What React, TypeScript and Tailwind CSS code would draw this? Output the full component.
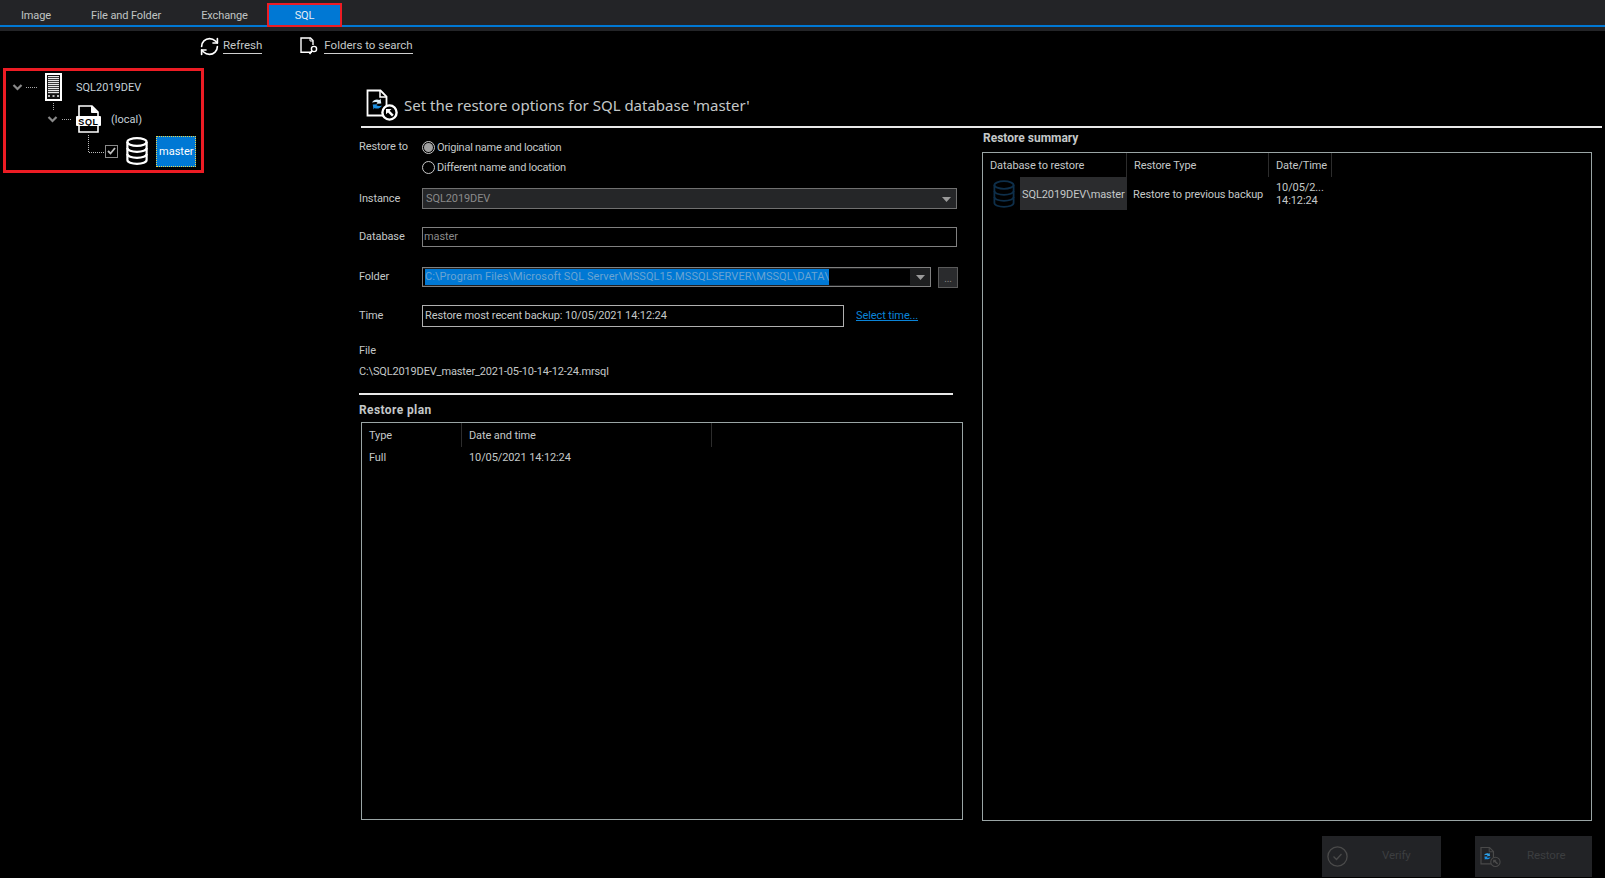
import { RefreshCw } from 'lucide-react';

const tabs = [
  { label: 'Image', width: 'w-[72px]' },
  { label: 'File and Folder', width: 'w-[108px]' },
  { label: 'Exchange', width: 'w-[89px]' },
];

function ServerIcon() {
  return (
    <svg width="17" height="28" viewBox="0 0 17 28">
      <rect x="0.5" y="0.5" width="16" height="27" fill="#fff" stroke="#fff" />
      <rect x="2" y="2" width="13" height="24" fill="#111" />
      {[3, 5, 7, 9, 11, 13, 15, 17, 19].map((y) => (
        <rect key={y} x="3" y={y} width="11" height="1.2" fill="#e8e8e8" />
      ))}
      <rect x="3" y="22" width="2" height="2" fill="#bbb" />
      <rect x="7.500" y="22" width="2" height="2" fill="#bbb" />
      <rect x="12" y="22" width="2" height="2" fill="#bbb" />
    </svg>
  );
}

function SqlFileIcon() {
  return (
    <svg width="26" height="28" viewBox="0 0 26 28">
      <path d="M3 1h13l6 6v20H3z" fill="#000" stroke="#fff" strokeWidth="1.6" />
      <path d="M15.500 1v6.500H22" fill="#fff" stroke="#fff" />
      <rect x="0" y="11" width="25" height="10" rx="1" fill="#fff" />
      <text x="12.5" y="19.5" textAnchor="middle" fontSize="9" fontWeight="700" fontFamily="Liberation Sans, sans-serif" fill="#000" letterSpacing="0.6">SQL</text>
    </svg>
  );
}

function DbIcon({ color = '#fff', w = 22, h = 28, sw = 2.2 }: { color?: string; w?: number; h?: number; sw?: number }) {
  return (
    <svg width={w} height={h} viewBox="0 0 22 28" fill="none" stroke={color} strokeWidth={sw}>
      <ellipse cx="11" cy="5" rx="9.6" ry="3.8" />
      <path d="M1.4 5v18c0 2.2 4.3 3.8 9.6 3.8s9.6-1.6 9.6-3.8V5" />
      <path d="M1.4 11c0 2.2 4.3 3.8 9.6 3.8s9.6-1.6 9.6-3.8" />
      <path d="M1.4 17c0 2.2 4.3 3.8 9.6 3.8s9.6-1.6 9.6-3.8" />
    </svg>
  );
}

function FolderSearchIcon() {
  return (
    <svg width="19" height="19" viewBox="0 0 19 19" fill="none" stroke="#fff" strokeWidth="1.4">
      <path d="M11 14.500v.7H1V1h9.500l2.500 2.500V8" />
      <path d="M10 1v3h3" strokeWidth="1" />
      <circle cx="14" cy="12" r="2.600" />
      <path d="M12 14L9.500 17" strokeWidth="1.800" />
    </svg>
  );
}

function RestoreIcon({ dim = false }: { dim?: boolean }) {
  const c = dim ? '#4a4a4a' : '#fff';
  const bg = dim ? '#222326' : '#000';
  return (
    <svg width="32" height="32" viewBox="0 0 32 32" fill="none">
      <path d="M1.5 1.5h13l6 6v19h-19z" stroke={c} strokeWidth="1.8" fill={bg} />
      <path d="M14 1.5v6.500h6.500" stroke={c} strokeWidth="1.5" />
      <path d="M6 13.500c1.500-3 5-3.800 7.500-2.500l1-1.400.8 5-4.800.2 1-1.400c-1.800-.8-3.600-.4-5.500.1z" fill={dim ? '#2f9fe6' : '#d8ecf8'} />
      <path d="M16 16.500c-1.500 3-5 3.800-7.500 2.500l-1 1.400-.8-5 4.800-.2-1 1.400c1.800.8 3.600.4 5.500-.1z" fill="#1a8ee0" />
      <circle cx="23.500" cy="23.500" r="7.100" stroke={c} strokeWidth={dim ? 1.6 : 2.400} fill={bg} />
      <path d="M20 20h5.500l-1.800 1.800 4 4-1.700 1.700-4-4L20 25.300z" fill={c} />
    </svg>
  );
}

function CheckCircleIcon() {
  return (
    <svg width="21" height="21" viewBox="0 0 21 21" fill="none" stroke="#4a4a4a" strokeWidth="1.3">
      <circle cx="10.500" cy="10.500" r="9.600" />
      <path d="M6.500 10.500l3 3 5-5.500" />
    </svg>
  );
}

function Caret({ color = '#9a9a9a' }: { color?: string }) {
  return (
    <svg width="9" height="5" viewBox="0 0 9 5">
      <path d="M0 0h9L4.500 5z" fill={color} />
    </svg>
  );
}

function Radio({ checked, label }: { checked?: boolean; label: string }) {
  return (
    <div className="flex h-[20px] items-center">
      <span className="flex h-[13px] w-[13px] items-center justify-center rounded-full border border-[#c8c8c8]">
        {checked && <span className="h-[9px] w-[9px] rounded-full bg-[#a0a0a0]" />}
      </span>
      <span className="ml-[2px] pt-[2px] tracking-[-0.25px]">{label}</span>
    </div>
  );
}

function ColHead({ label, className }: { label: string; className: string }) {
  return <div className={`flex h-[24px] items-center whitespace-nowrap border-r border-[#2c2c2c] pl-[7px] pt-[3px] ${className}`}>{label}</div>;
}

function Tree() {
  return (
    <div className="ml-[3px] h-[105px] w-[201px] border-[3px] border-[#ed1c24] tracking-normal">
      <div className="flex h-[32px] items-center">
        <svg width="39" height="32" viewBox="0 0 39 32" fill="none">
          <path d="M7.500 14l4 4 4-4" stroke="#8a8a8a" strokeWidth="2.200" />
          <path d="M20 16.500h11" stroke="#aaa" strokeDasharray="1 1" />
        </svg>
        <ServerIcon />
        <span className="ml-[14px] pt-[2px] text-[#c4d0d8]">SQL2019DEV</span>
      </div>
      <div className="flex h-[32px] items-center">
        <svg width="70" height="32" viewBox="0 0 70 32" fill="none">
          <path d="M47.500 0v8" stroke="#aaa" strokeDasharray="1 1" />
          <path d="M42.500 14l4 4 4-4" stroke="#8a8a8a" strokeWidth="2.200" />
          <path d="M56 16.500h10" stroke="#aaa" strokeDasharray="1 1" />
        </svg>
        <SqlFileIcon />
        <span className="ml-[9px] pt-[2px] text-[#c4d0d8]">(local)</span>
      </div>
      <div className="flex h-[32px] items-center">
        <svg width="99" height="32" viewBox="0 0 99 32" fill="none">
          <path d="M82.500 0v17.500H99" stroke="#bbb" strokeDasharray="1 1" />
        </svg>
        <span className="flex h-[13px] w-[13px] items-center justify-center border border-[#8a8a8a]">
          <svg width="9" height="8" viewBox="0 0 9 8" fill="none">
            <path d="M1 4l2.500 2.500L8 1" stroke="#c0c0c0" strokeWidth="1.800" />
          </svg>
        </span>
        <span className="ml-[8px]">
          <DbIcon />
        </span>
        <span className="ml-[8px] flex h-[31px] w-[40px] items-center border border-dotted border-[#e8d44a] bg-[#0078d4] pl-[2px] pt-[2px] text-white">
          master
        </span>
      </div>
    </div>
  );
}

function RestoreForm() {
  return (
    <div className="w-[623px] shrink-0">
      <div className="mt-[9px] flex">
        <div className="w-[63px] pt-[1px] leading-[18px]">Restore to</div>
        <div>
          <Radio checked label="Original name and location" />
          <Radio label="Different name and location" />
        </div>
      </div>

      <div className="mt-[11px] flex h-[21px] items-center">
        <div className="w-[63px] pt-[1px]">Instance</div>
        <div className="flex h-full w-[535px] items-center justify-between border border-[#707070] bg-[#252628] pl-[3px] pr-[5px] pt-[1px] text-[#8a8a8a]">
          SQL2019DEV
          <Caret />
        </div>
      </div>

      <div className="mt-[18px] flex h-[20px] items-center">
        <div className="w-[63px] pt-[1px]">Database</div>
        <div className="flex h-full w-[535px] items-center border border-[#808080] pl-[1px] pt-[1px] text-[#8a8a8a]">master</div>
      </div>

      <div className="mt-[20px] flex h-[20px] items-center">
        <div className="w-[63px]">Folder</div>
        <div className="flex h-full w-[509px] items-center border border-[#808080] bg-[#1e1f20]">
          <div className="flex h-[16px] w-[487px] items-center bg-black pl-[2px]">
            <span className="bg-[#0078d4] leading-[16px] tracking-[0.08px] text-[#6aa4d2]">C:\Program Files\Microsoft SQL Server\MSSQL15.MSSQLSERVER\MSSQL\DATA\</span>
          </div>
          <div className="flex flex-1 justify-center">
            <Caret />
          </div>
        </div>
        <div className="ml-[7px] flex h-[21px] w-[20px] items-end justify-center border border-[#5a5a5a] bg-[#2a2b2d] pb-[3px] text-[10px] leading-none text-[#8a8a8a]">...</div>
      </div>

      <div className="mt-[18px] flex h-[22px] items-center">
        <div className="w-[63px]">Time</div>
        <div className="flex h-full w-[422px] items-center border border-[#b0b0b0] pl-[2px]">
          Restore most recent backup: 10/05/2021 14:12:24
        </div>
        <a className="ml-[12px] text-[#0a84d8] underline">Select time...</a>
      </div>

      <div className="mt-[16px] h-[16px] leading-[16px]">File</div>
      <div className="mt-[5px] h-[16px] leading-[16px] tracking-[-0.15px]">C:\SQL2019DEV_master_2021-05-10-14-12-24.mrsql</div>
      <div className="mt-[13px] h-[2px] w-[594px] bg-[#e8e8e8]" />
      <div className="mt-[7px] h-[16px] text-[12px] font-bold leading-[16px] tracking-[0.4px]">Restore plan</div>

      <div className="ml-[2px] mt-[4px] h-[398px] w-[602px] border border-[#9aa5a5]">
        <div className="flex">
          <ColHead label="Type" className="w-[100px]" />
          <ColHead label="Date and time" className="w-[250px]" />
        </div>
        <div className="flex h-[20px] items-center pt-[3px]">
          <div className="w-[100px] pl-[7px]">Full</div>
          <div className="pl-[7px]">10/05/2021 14:12:24</div>
        </div>
      </div>
    </div>
  );
}

function Summary() {
  return (
    <div className="flex-1 pr-[13px]">
      <div className="mt-[2px] h-[16px] pl-[1px] text-[12px] font-bold leading-[16px] tracking-normal">Restore summary</div>
      <div className="mt-[6px] h-[669px] w-[610px] border border-[#9aa5a5] text-[#c4c8c8]">
        <div className="flex">
          <ColHead label="Database to restore" className="w-[144px]" />
          <ColHead label="Restore Type" className="w-[142px]" />
          <ColHead label="Date/Time" className="w-[63px]" />
        </div>
        <div className="flex h-[33px]">
          <div className="flex w-[37px] items-center justify-end pr-[5px]">
            <DbIcon color="#0e2f4a" w={22} h={28} sw={1.800} />
          </div>
          <div className="flex w-[107px] items-center whitespace-nowrap bg-[#2b2c2e] pl-[2px] pt-[3px]">SQL2019DEV\master</div>
          <div className="flex w-[142px] items-center whitespace-nowrap pl-[6px] pt-[3px]">Restore to previous backup</div>
          <div className="flex flex-col justify-center pl-[7px] leading-[13px]">
            <span>10/05/2...</span>
            <span>14:12:24</span>
          </div>
        </div>
      </div>
    </div>
  );
}

export default function App() {
  return (
    <div className="flex h-[878px] w-[1605px] flex-col overflow-hidden bg-black font-['Roboto',sans-serif] text-[11px] tracking-[-0.1px] text-[#c4c8c8]">
      <div className="h-[31px] shrink-0 bg-[#232427]">
        <div className="flex h-[25px]">
          {tabs.map((t) => (
            <div key={t.label} className={`${t.width} flex h-[25px] items-center justify-center pt-[7px] text-[#c0c4c4]`}>
              {t.label}
            </div>
          ))}
          <div className="relative -ml-[2px] mt-[3px] flex h-[24px] w-[75px] items-center justify-center border-2 border-[#ed1c24] bg-[#0078d4] pt-[2px] text-[#e6eef4]">SQL</div>
        </div>
        <div className="h-[2px] bg-[#0078d4]" />
      </div>

      <div className="flex h-[37px] shrink-0 items-center pb-[7px] pl-[199px] text-[11.5px] tracking-normal">
        <RefreshCw size={21} color="#fff" strokeWidth={1.900} />
        <span className="ml-[3px] border-b border-[#d0d0d0] leading-[15px]">Refresh</span>
        <span className="ml-[38px]">
          <FolderSearchIcon />
        </span>
        <span className="ml-[5px] border-b border-[#d0d0d0] leading-[15px]">Folders to search</span>
      </div>

      <div className="flex min-h-0 flex-1">
        <div className="w-[359px] shrink-0">
          <Tree />
        </div>
        <div className="flex min-w-0 flex-1 flex-col">
          <div className="ml-[2px] mr-[3px] flex h-[60px] shrink-0 items-end border-b-2 border-[#e8e8e8] pb-[5px] pl-[5px] tracking-normal">
            <RestoreIcon />
            <span className="ml-[6px] pb-[5px] font-['Noto_Sans',sans-serif] text-[15px] text-[#c4c8c8]">Set the restore options for SQL database 'master'</span>
          </div>
          <div className="flex">
            <RestoreForm />
            <Summary />
          </div>
          <div className="mr-[13px] mt-[15px] flex justify-end gap-[34px] text-[#3c3e40]">
            <div className="flex h-[41px] w-[119px] items-center bg-[#222326] pl-[5px]">
              <CheckCircleIcon />
              <span className="ml-[34px] pb-[2px] text-[11.5px]">Verify</span>
            </div>
            <div className="flex h-[41px] w-[117px] items-center bg-[#222326] pl-[5px]">
              <span className="flex w-[21px] justify-center">
                <RestoreIcon dim />
              </span>
              <span className="ml-[26px] pb-[2px] text-[11.5px]">Restore</span>
            </div>
          </div>
        </div>
      </div>
    </div>
  );
}
